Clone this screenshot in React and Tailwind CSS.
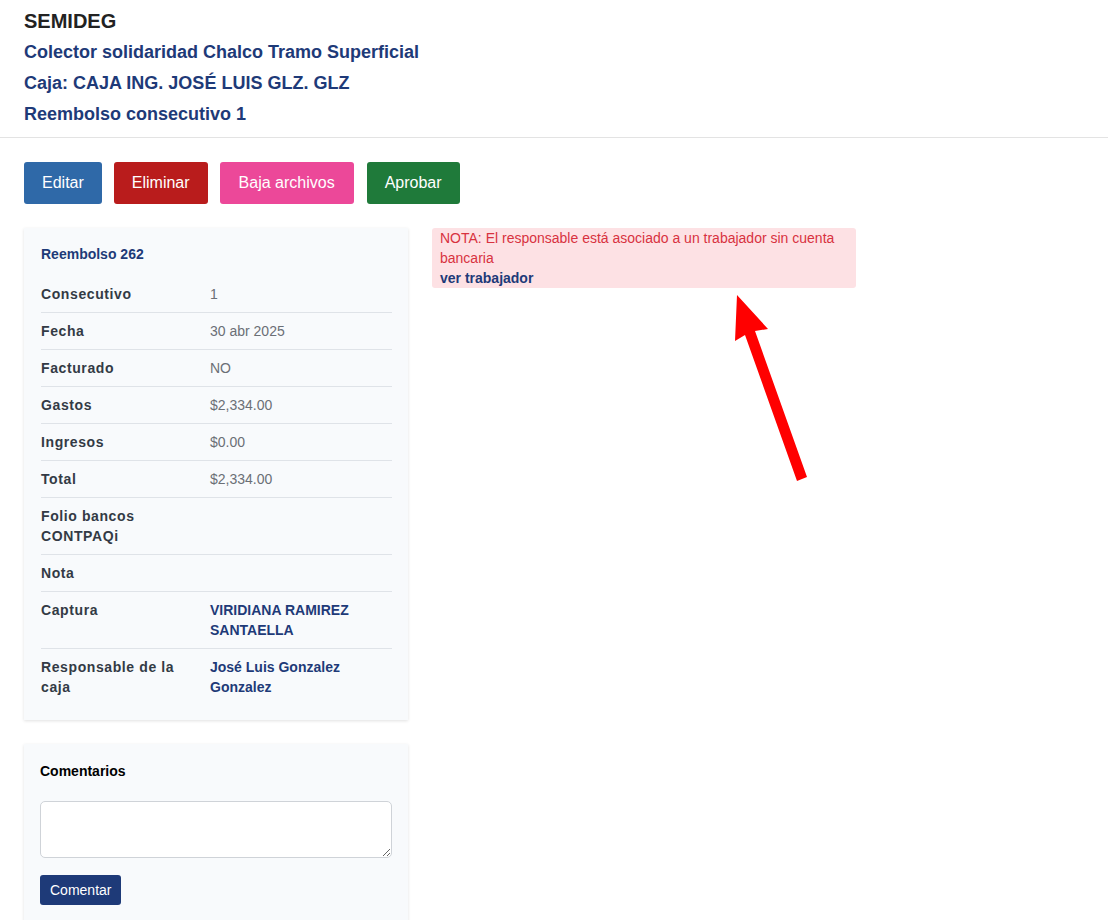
import React from 'react';

const filas = [
  { label: 'Consecutivo', valor: '1' },
  { label: 'Fecha', valor: '30 abr 2025' },
  { label: 'Facturado', valor: 'NO' },
  { label: 'Gastos', valor: '$2,334.00' },
  { label: 'Ingresos', valor: '$0.00' },
  { label: 'Total', valor: '$2,334.00' },
  { label: 'Folio bancos CONTPAQi', valor: '' },
  { label: 'Nota', valor: '' },
  { label: 'Captura', valor: 'VIRIDIANA RAMIREZ SANTAELLA', link: true },
  { label: 'Responsable de la caja', valor: 'José Luis Gonzalez Gonzalez', link: true },
];

const Fila = ({ label, valor, link, last }) => (
  <div className={`flex py-2 ${last ? '' : 'border-b border-[#dfe3e8]'}`}>
    <div className="w-[169px] shrink-0 pr-3 font-bold tracking-[0.6px] text-[#333a45]">{label}</div>
    <div className={link ? 'font-bold text-[#1e3a78]' : 'text-[#6b6f76]'}>{valor}</div>
  </div>
);

export default function App() {
  return (
    <div className="relative min-h-[920px] bg-white font-['Liberation_Sans',Arial,sans-serif] text-sm leading-5">
      {/* Encabezado */}
      <header className="border-b border-[#e3e3e3] px-6 pt-[7px] pb-[7px]">
        <h1 className="text-xl font-bold leading-[28px] text-[#222]">SEMIDEG</h1>
        <div className="mt-[2px] text-lg font-bold leading-[31px] text-[#1e3a78]">
          <div>Colector solidaridad Chalco Tramo Superficial</div>
          <div>Caja: CAJA ING. JOSÉ LUIS GLZ. GLZ</div>
          <div>Reembolso consecutivo 1</div>
        </div>
      </header>

      <main className="px-6 pt-6">
        {/* Acciones */}
        <div className="flex gap-3">
          <button className="rounded-[3px] bg-[#2f69a8] px-[18px] py-[9px] text-base leading-6 text-white">Editar</button>
          <button className="rounded-[3px] bg-[#b91c1c] px-[18px] py-[9px] text-base leading-6 text-white">Eliminar</button>
          <button className="rounded-[3px] bg-[#ec4899] px-[19px] py-[9px] text-base leading-6 text-white">Baja archivos</button>
          <button className="ml-px rounded-[3px] bg-[#1f7a3a] px-[18px] py-[9px] text-base leading-6 text-white">Aprobar</button>
        </div>

        <div className="mt-6 flex items-start gap-6">
          <div className="flex w-[384px] flex-col gap-6">
            {/* Detalle */}
            <section className="bg-[#f8fafc] pl-[17px] pr-4 pt-4 pb-[15px] shadow-[0_1px_3px_rgba(0,0,0,0.12)]">
              <h2 className="font-bold text-[#1e3a78]">Reembolso 262</h2>
              <div className="mt-3">
                {filas.map((f, i) => (
                  <Fila key={f.label} {...f} last={i === filas.length - 1} />
                ))}
              </div>
            </section>

            {/* Comentarios */}
            <section className="bg-[#f8fafc] px-4 pt-[17px] pb-4 shadow-[0_1px_3px_rgba(0,0,0,0.12)]">
              <h3 className="font-bold text-black">Comentarios</h3>
              <textarea className="mt-5 block h-[57px] w-full rounded-[5px] border border-[#cfd3d8] bg-white" />
              <button className="mt-[17px] rounded-[3px] bg-[#1e3a78] px-[10px] py-[5px] leading-5 text-white">Comentar</button>
            </section>
          </div>

          {/* Aviso */}
          <div className="w-[424px] rounded-[3px] bg-[#fde1e4] px-2 text-[#d8323f]">
            <p>NOTA: El responsable está asociado a un trabajador sin cuenta bancaria</p>
            <a className="font-bold text-[#1e3a78]">ver trabajador</a>
          </div>
        </div>
      </main>

      {/* Flecha de anotación */}
      <svg className="pointer-events-none absolute left-0 top-0" width="1108" height="920">
        <polygon points="737,295 768,329 755,331 807,477 797,481 745,335 735,341" fill="#ff0000" />
      </svg>
    </div>
  );
}
